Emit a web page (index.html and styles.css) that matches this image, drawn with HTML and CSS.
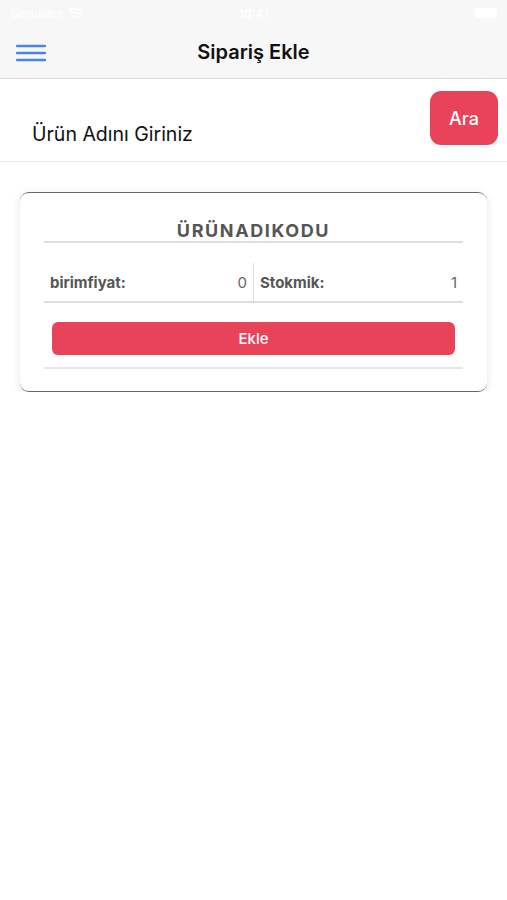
FILE: index.html
```html
<!DOCTYPE html>
<html lang="tr">
<head>
    <meta charset="UTF-8">
    <meta name="viewport" content="width=device-width, initial-scale=1.0">
    <title>Sipariş Ekle</title>
    <link rel="stylesheet" href="styles.css">
</head>
<body>
    <div class="status_bar">
        <span class="carrier">Simulator
            <svg width="16" height="12" viewBox="0 0 16 12"><path d="M1 4.5a10 10 0 0 1 14 0M3.5 7a6.5 6.5 0 0 1 9 0M6 9.5a3 3 0 0 1 4 0" fill="none" stroke="#fff" stroke-width="2"/></svg>
        </span>
        <span class="clock">10:41</span>
        <span class="battery"></span>
    </div>
    <div class="nav_bar">
        <button class="menu_btn" aria-label="menu">
            <svg width="30" height="18" viewBox="0 0 30 18"><path d="M1 2h28M1 9h28M1 16h28" stroke="#4a84e8" stroke-width="2.4" stroke-linecap="round"/></svg>
        </button>
        <h1 class="nav_title">Sipariş Ekle</h1>
    </div>
    <div class="search_row">
        <span class="search_input">Ürün Adını Giriniz</span>
        <button class="search_btn">Ara</button>
    </div>
    <div class="card">
        <div class="card_title">ÜRÜNADIKODU</div>
        <div class="card_row">
            <div class="cell">
                <span class="cell_label">birimfiyat:</span>
                <span class="cell_value">0</span>
            </div>
            <div class="cell">
                <span class="cell_label">Stokmik:</span>
                <span class="cell_value">1</span>
            </div>
        </div>
        <div class="card_action">
            <button class="add_btn">Ekle</button>
        </div>
    </div>
</body>
</html>
```
FILE: styles.css
```css
* {
    box-sizing: border-box;
}

body {
    margin: 0;
    background: #fff;
    font-family: Inter, 'Noto Sans', Arial, sans-serif;
    color: #111;
}

.status_bar {
    height: 26px;
    background: #f7f7f7;
    display: flex;
    align-items: center;
    justify-content: space-between;
    padding: 0 10px 0 10px;
    color: #fff;
    font-size: 12px;
}

.carrier {
    display: flex;
    align-items: center;
    gap: 4px;
    width: 120px;
}

.clock {
    font-weight: 600;
}

.battery {
    width: 22px;
    height: 10px;
    background: #fff;
    border-radius: 2px;
    margin-left: 98px;
}

.nav_bar {
    height: 53px;
    background: #f7f7f7;
    border-bottom: 1px solid #dcdcdc;
    display: flex;
    align-items: center;
    position: relative;
}

.menu_btn {
    border: 0;
    background: none;
    padding: 0;
    margin-left: 16px;
    margin-top: 1px;
    display: flex;
}

.nav_title {
    position: absolute;
    left: 0;
    right: 0;
    margin: 0;
    text-align: center;
    font-size: 20px;
    font-weight: 600;
    pointer-events: none;
}

.search_row {
    height: 83px;
    border-bottom: 1px solid #e8e8e8;
    display: flex;
    justify-content: space-between;
    align-items: flex-start;
    padding: 12px 9px 0 32px;
}

.search_input {
    margin-top: 31px;
    font-size: 19.5px;
    color: #111;
}

.search_btn {
    width: 68px;
    height: 54px;
    border: 0;
    border-radius: 11px;
    background: #e9435a;
    color: #fff;
    font-family: inherit;
    font-size: 18px;
    font-weight: 500;
}

.card {
    margin: 30px 20px 0 20px;
    height: 200px;
    border-radius: 9px;
    border-top: 1px solid #6e6264;
    border-bottom: 1px solid #6e6264;
    box-shadow: 0 2px 10px rgba(0, 0, 0, 0.1);
    padding: 0 24px;
}

.card_title {
    height: 50px;
    border-bottom: 2px solid #dedede;
    text-align: center;
    padding-top: 27px;
    font-size: 18px;
    font-weight: 700;
    letter-spacing: 1.6px;
    color: #555;
}

.card_row {
    display: flex;
    height: 60px;
    border-bottom: 2px solid #dedede;
}

.cell {
    flex: 1;
    display: flex;
    align-items: center;
    justify-content: space-between;
    padding: 20px 6px 0 6px;
    font-size: 15px;
}

.cell + .cell {
    border-left: 1px solid #dedede;
    margin-top: 20px;
    padding-top: 0;
}

.cell_label {
    font-weight: 700;
    color: #555;
}

.cell_value {
    font-size: 15px;
    color: #666;
}

.card_action {
    padding: 19px 8px 12px 8px;
    border-bottom: 2px solid #e6e6e6;
}

.add_btn {
    width: 100%;
    height: 33px;
    border: 0;
    border-radius: 6px;
    background: #e9435a;
    color: #fff;
    font-family: inherit;
    font-size: 15px;
    font-weight: 500;
}
```
